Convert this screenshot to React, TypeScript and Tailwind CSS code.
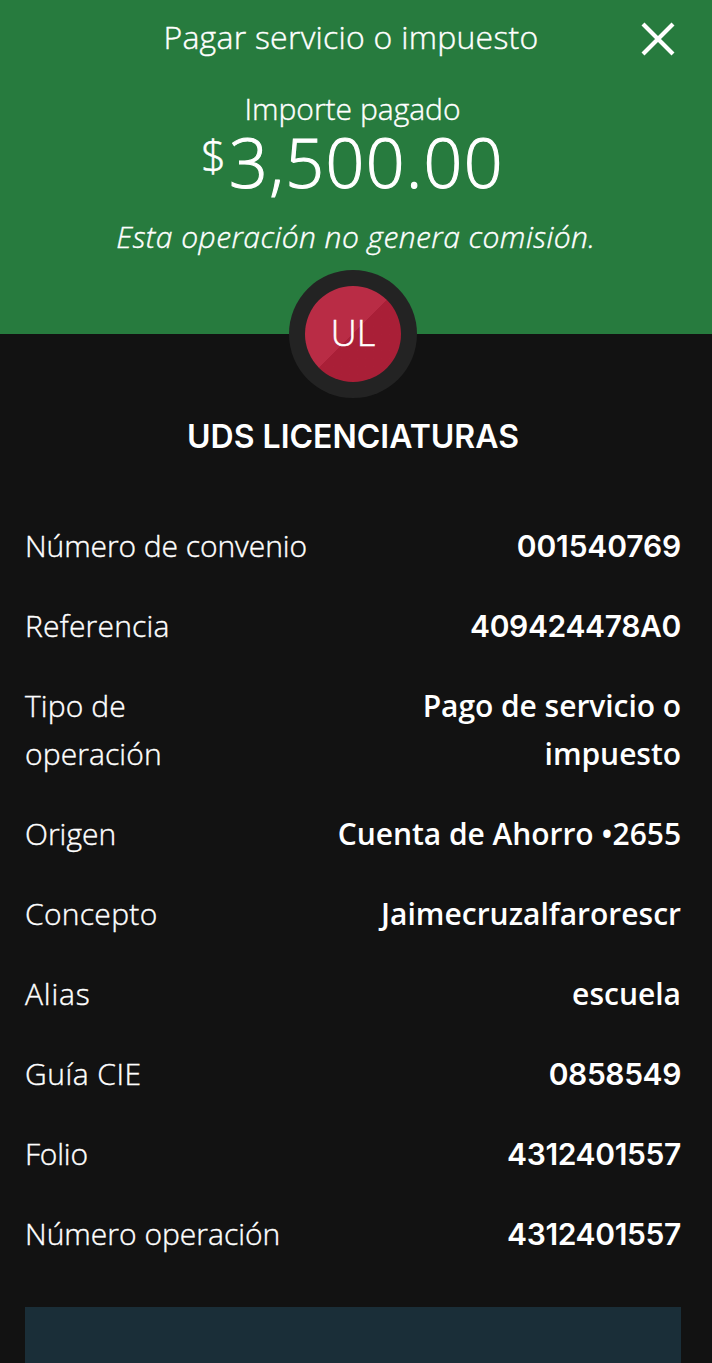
import { clsx } from "clsx"

interface Detail {
  label: string
  value: string
  labelClass?: string
  valueClass?: string
}

const DETAILS: Detail[] = [
  { label: "Número de convenio", value: "001540769", labelClass: "tracking-[-0.08px]", valueClass: "font-['Inter',sans-serif] tracking-[-0.15px]" },
  { label: "Referencia", value: "409424478A0", labelClass: "tracking-[0.2px]", valueClass: "font-['Inter',sans-serif] tracking-[-0.35px]" },
  { label: "Tipo de operación", value: "Pago de servicio o impuesto", labelClass: "w-[200px] tracking-[0.1px]", valueClass: "w-[300px] tracking-[-0.05px]" },
  { label: "Origen", value: "Cuenta de Ahorro •2655", valueClass: "tracking-[-0.05px]" },
  { label: "Concepto", value: "Jaimecruzalfarorescr", labelClass: "tracking-[0.3px]" },
  { label: "Alias", value: "escuela", labelClass: "tracking-[0.8px]" },
  { label: "Guía CIE", value: "0858549", labelClass: "tracking-[0.5px]", valueClass: "font-['Inter',sans-serif] tracking-[-0.4px]" },
  { label: "Folio", value: "4312401557", labelClass: "tracking-[-0.2px]", valueClass: "font-['Inter',sans-serif] tracking-[-0.35px]" },
  { label: "Número operación", value: "4312401557", valueClass: "font-['Inter',sans-serif] tracking-[-0.35px]" },
]

function CloseButton() {
  return (
    <button type="button" aria-label="Cerrar" className="h-[34px] w-[34px]">
      <svg viewBox="0 0 34 34" className="h-full w-full" fill="none" stroke="white" strokeWidth="4.2">
        <path d="M2 2 32 32M32 2 2 32" />
      </svg>
    </button>
  )
}

function Avatar({ initials }: { initials: string }) {
  return (
    <div className="relative mx-auto -mt-16 flex h-32 w-32 items-center justify-center rounded-full bg-[#232323]">
      <div className="flex h-24 w-24 items-center justify-center rounded-full bg-linear-135 from-[#b92c45] from-50% to-[#a91f37] to-50%">
        <span className="pb-[3px] text-[36px] leading-none font-light [-webkit-text-stroke:0.5px_white]">{initials}</span>
      </div>
    </div>
  )
}

function DetailRow({ label, value, labelClass, valueClass }: Detail) {
  return (
    <div className="flex justify-between text-[30px] leading-[48px]">
      <dt className={clsx("font-light [-webkit-text-stroke:0.4px_white]", labelClass)}>{label}</dt>
      <dd className={clsx("text-right font-semibold", valueClass)}>{value}</dd>
    </div>
  )
}

export default function App() {
  return (
    <div className="h-[1363px] w-[712px] overflow-hidden bg-[#121212] font-['Open_Sans',sans-serif] text-white">
      <header className="h-[334px] bg-[#277b3e] font-light [-webkit-text-stroke:0.4px_white]">
        <div className="grid h-[78px] grid-cols-[142px_418px_152px] items-center">
          <span />
          <h1 className="pb-[4px] text-center text-[32px] leading-[44px] tracking-[0.25px] whitespace-nowrap">Pagar servicio o impuesto</h1>
          <div className="flex justify-end pr-[37px]">
            <CloseButton />
          </div>
        </div>
        <div className="flex flex-col items-center pr-[7px]">
          <p className="mt-[10px] text-[30px] leading-[42px]">Importe pagado</p>
          <p className="flex h-[67px] items-start gap-[3px] whitespace-nowrap">
            <span className="text-[44px] leading-[50px] [-webkit-text-stroke:0.5px_white]">$</span>
            <span className="text-[68px] leading-[63px] tracking-[1.4px] [-webkit-text-stroke:1.1px_white]">3,500.00</span>
          </p>
        </div>
        <p className="mt-[16px] text-center text-[30px] leading-[48px] tracking-[0.45px] whitespace-nowrap italic">
          Esta operación no genera comisión.
        </p>
      </header>

      <main className="pr-[31px] pl-[25px]">
        <Avatar initials="UL" />
        <h2 className="mt-[15px] text-center font-['Inter',sans-serif] text-[32px] leading-[48px] font-semibold">UDS LICENCIATURAS</h2>
        <dl className="mt-[61px] flex flex-col gap-8">
          {DETAILS.map((detail) => (
            <DetailRow key={detail.label} {...detail} />
          ))}
        </dl>
        <div className="mt-[49px] h-14 bg-[#1a2e38]" />
      </main>
    </div>
  )
}
